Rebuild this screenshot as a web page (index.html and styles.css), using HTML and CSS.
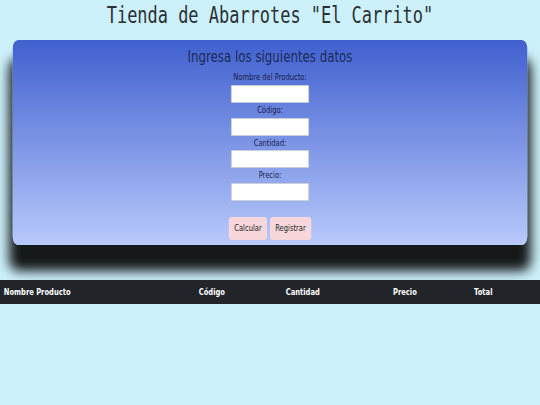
FILE: index.html
```html
<!DOCTYPE html>
<html lang="es">
<head>
<meta charset="utf-8">
<title>Tienda de Abarrotes</title>
<link rel="stylesheet" href="styles.css">
</head>
<body>
<div class="viewport">
<div class="page">
  <h1 class="title">Tienda de Abarrotes "El Carrito"</h1>
  <section class="card">
    <h3 class="card-title">Ingresa los siguientes datos</h3>
    <form class="form">
      <label class="label">Nombre del Producto:</label>
      <input class="input" type="text">
      <label class="label">Código:</label>
      <input class="input" type="text">
      <label class="label">Cantidad:</label>
      <input class="input" type="text">
      <label class="label">Precio:</label>
      <input class="input" type="text">
      <div class="actions">
        <button class="btn" type="button">Calcular</button>
        <button class="btn" type="button">Registrar</button>
      </div>
    </form>
  </section>
  <div class="table-head">
    <div class="th">Nombre Producto</div>
    <div class="th">Código</div>
    <div class="th">Cantidad</div>
    <div class="th">Precio</div>
    <div class="th">Total</div>
  </div>
</div>
</div>
</body>
</html>
```
FILE: styles.css
```css
html, body {
  margin: 0;
  padding: 0;
  background: #cdf1fb;
  overflow: hidden;
}
body {
  font-family: "DejaVu Sans", sans-serif;
}
.viewport {
  width: 540px;
  height: 405px;
  overflow: clip;
}
.page {
  width: 720px;
  transform: scaleX(0.75);
  transform-origin: 0 0;
}
.title {
  margin: 0;
  height: 40px;
  box-sizing: border-box;
  padding-top: 2px;
  font-family: "DejaVu Sans Mono", monospace;
  font-weight: normal;
  font-size: 22.6px;
  line-height: 27px;
  color: #2a3035;
  text-align: center;
}
.card {
  margin: 0 17px;
  padding: 8px 0 5px;
  border-radius: 8px;
  background: linear-gradient(#4060cf, #b8c9fb);
  box-shadow: 0 22px 14px 4px rgba(0, 0, 0, 0.9);
  display: flex;
  flex-direction: column;
  align-items: center;
}
.card-title {
  margin: 0;
  font-weight: normal;
  font-size: 15.75px;
  line-height: 18.9px;
  color: #1c2a57;
}
.form {
  margin-top: 3.3px;
  display: flex;
  flex-direction: column;
  align-items: center;
}
.label {
  font-size: 9px;
  line-height: 14.7px;
  color: #17204c;
}
.input {
  width: 104px;
  height: 18px;
  box-sizing: border-box;
  margin: 0;
  padding: 0;
  border: 1px solid #c9ced6;
  border-radius: 1px;
  background: #fff;
}
.actions {
  margin-top: 15.5px;
  display: flex;
  gap: 4px;
}
.btn {
  height: 23px;
  margin: 0;
  padding: 0 7px;
  border: none;
  border-radius: 4px;
  background: #f8d7da;
  color: #212529;
  font-family: "DejaVu Sans", sans-serif;
  font-size: 9px;
}
.table-head {
  margin-top: 35px;
  height: 24px;
  background: #212529;
  display: grid;
  grid-template-columns: 260px 116px 143px 108px 93px;
  align-items: center;
}
.th {
  padding-left: 5px;
  color: #fff;
  font-weight: bold;
  font-size: 9px;
}
```
